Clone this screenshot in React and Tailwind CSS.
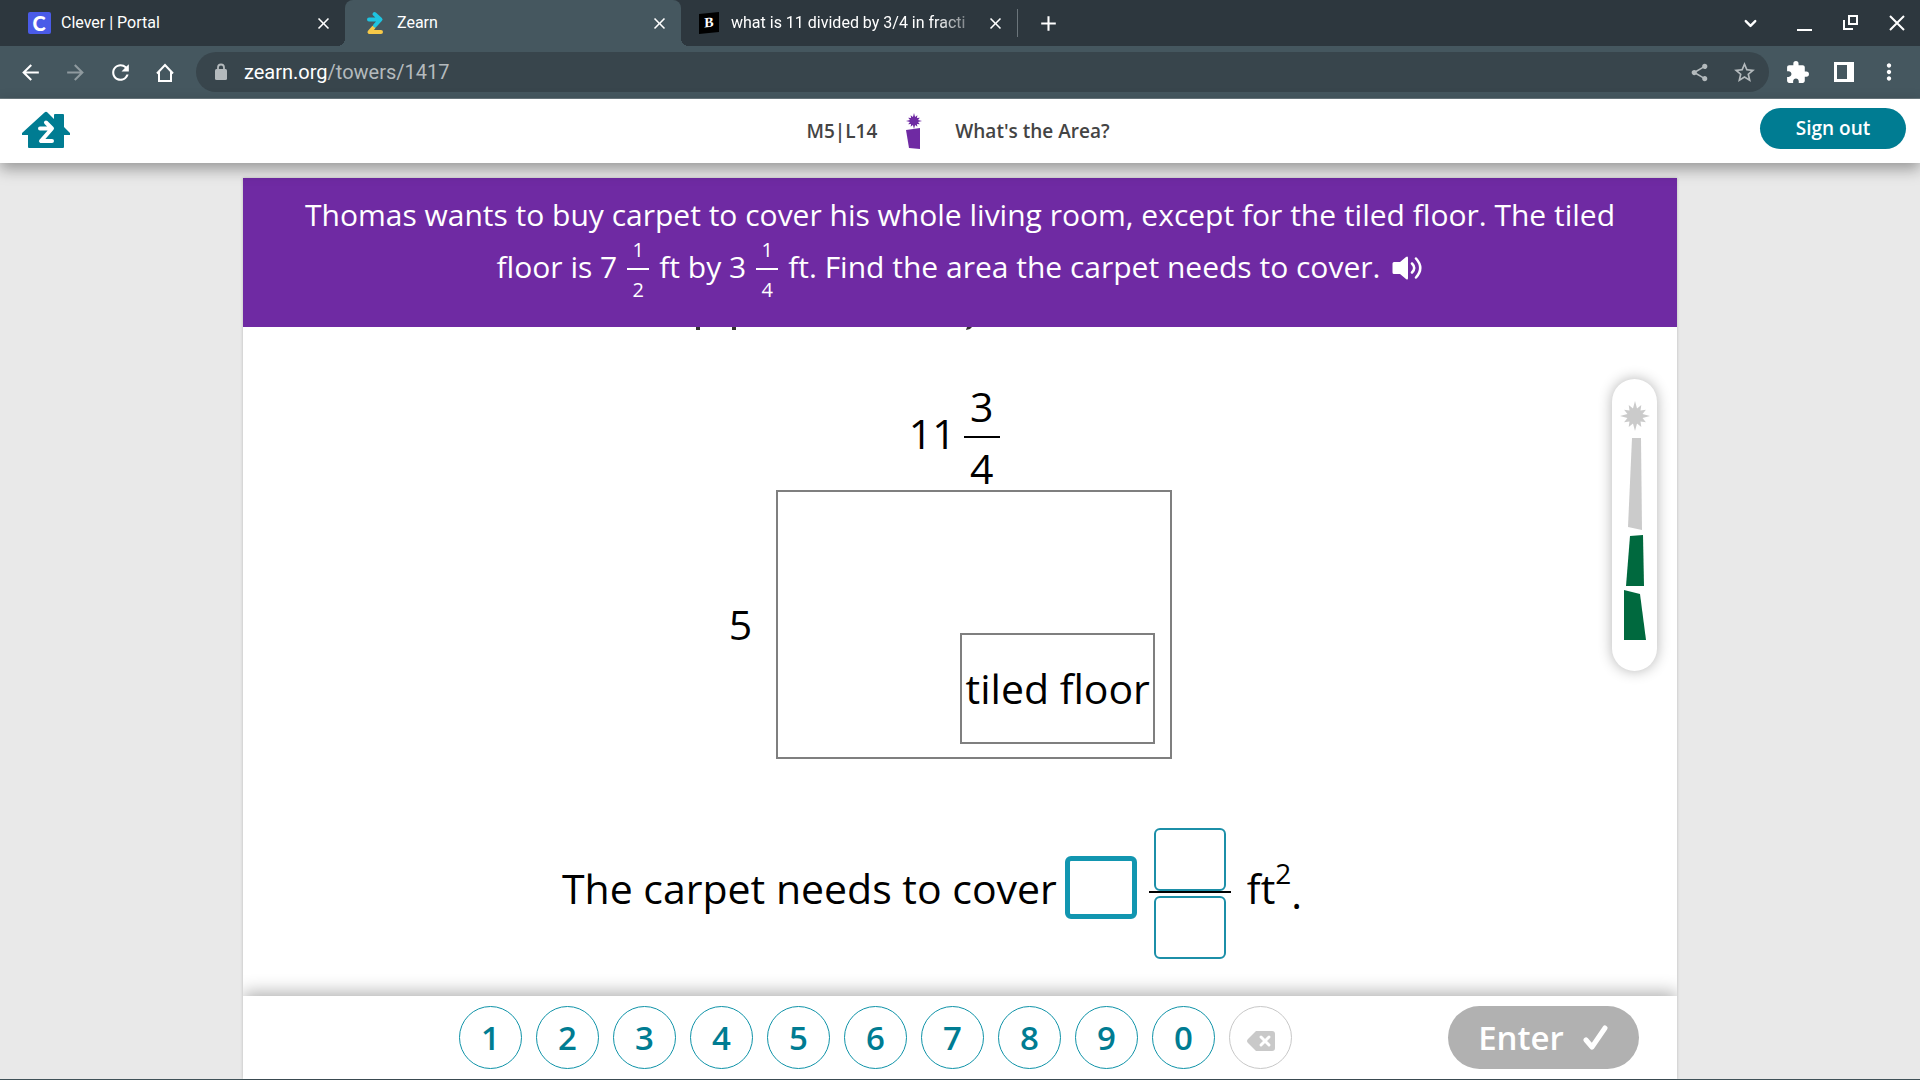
import {
  MdArrowBack,
  MdArrowForward,
  MdClose,
  MdExtension,
  MdAdd,
  MdMoreVert,
  MdRefresh,
  MdShare,
  MdStarBorder,
} from 'react-icons/md';
import { ChevronDown } from 'lucide-react';

const digits = ['1', '2', '3', '4', '5', '6', '7', '8', '9', '0'];

function CleverIcon() {
  return (
    <span className="flex h-[22px] w-[23px] items-center justify-center rounded-xs bg-[#4a5be8] font-['Lato'] text-xl leading-none font-black text-white">
      C
    </span>
  );
}

function ZearnIcon() {
  return (
    <svg width="18" height="24" viewBox="0 0 18 24" fill="none" strokeLinecap="round" strokeLinejoin="round">
      <path d="M7.500 16.500 3.500 21H15" stroke="#f7c948" strokeWidth="4" />
      <path d="M3 8.500h11M8.500 3l6 5.500-5.500 6" stroke="#1fc4e0" strokeWidth="4" />
    </svg>
  );
}

function BrainlyIcon() {
  return (
    <span className="mr-1 flex h-5 w-[21px] -skew-y-6 items-center justify-center bg-black font-['Liberation_Serif'] text-sm leading-none font-bold text-white">
      B
    </span>
  );
}

function Tab({ icon, title, active, fade }) {
  return (
    <div
      className={
        active
          ? 'relative flex h-full w-[336px] items-center rounded-t-lg bg-[#45575f] pr-3 pl-[18px] before:absolute before:bottom-0 before:-left-2 before:h-2 before:w-2 before:bg-[radial-gradient(circle_at_0_0,transparent_8px,#45575f_8px)] after:absolute after:-right-2 after:bottom-0 after:h-2 after:w-2 after:bg-[radial-gradient(circle_at_100%_0,transparent_8px,#45575f_8px)]'
          : 'flex h-full w-[336px] items-center pr-3 pl-[18px]'
      }
    >
      <span className="flex w-6 shrink-0 justify-center">{icon}</span>
      <span
        className={
          fade
            ? 'ml-2 flex-1 whitespace-nowrap [mask-image:linear-gradient(to_right,black_80%,transparent)]'
            : 'ml-2.5 flex-1 whitespace-nowrap'
        }
      >
        {title}
      </span>
      <button aria-label={`Close ${title}`} className="text-white">
        <MdClose size={19} />
      </button>
    </div>
  );
}

function BrowserBar() {
  return (
    <div className="font-['Roboto'] text-white">
      <div className="flex h-[46px] items-center bg-[#2d373e] pl-[9px] text-base">
        <Tab icon={<CleverIcon />} title="Clever | Portal" />
        <Tab icon={<ZearnIcon />} title="Zearn" active />
        <Tab icon={<BrainlyIcon />} title="what is 11 divided by 3/4 in fracti" fade />
        <div className="h-7 w-px bg-[#6b757b]" />
        <button aria-label="New tab" className="ml-[18px]">
          <MdAdd size={25} />
        </button>
        <div className="ml-auto flex items-center gap-7 pr-3.5">
          <button aria-label="Search tabs" className="mr-2">
            <ChevronDown size={19} strokeWidth={3} />
          </button>
          <button aria-label="Minimize">
            <svg width="18" height="18" viewBox="0 0 18 18">
              <path d="M1 16h15" stroke="white" strokeWidth="2" />
            </svg>
          </button>
          <button aria-label="Restore">
            <svg width="18" height="18" viewBox="0 0 18 18" fill="none" stroke="white" strokeWidth="2">
              <path d="M7 2h8v8H7zM2 6v9h9" />
            </svg>
          </button>
          <button aria-label="Close window">
            <svg width="18" height="18" viewBox="0 0 18 18">
              <path d="M2 2l14 14M16 2 2 16" stroke="white" strokeWidth="2" />
            </svg>
          </button>
        </div>
      </div>
      <div className="flex h-[53px] items-center border-b border-[#6d7b81] bg-[#45575f] pr-[18px] pl-[18px]">
        <div className="flex items-center gap-5">
          <button aria-label="Back">
            <MdArrowBack size={25} />
          </button>
          <button aria-label="Forward" className="text-[#8f9a9f]">
            <MdArrowForward size={25} />
          </button>
          <button aria-label="Reload">
            <MdRefresh size={25} />
          </button>
          <button aria-label="Home">
            <svg width="25" height="25" viewBox="0 0 25 25" fill="none" stroke="white" strokeWidth="2">
              <path d="M6 12v9h12v-9M4 13.500 12 5l8 8.500" />
            </svg>
          </button>
        </div>
        <div className="ml-[18px] flex h-10 flex-1 items-center rounded-full bg-[#38454c] pr-[12px] pl-[18px] text-[#b4babd]">
          <svg width="14" height="18" viewBox="0 0 14 18">
            <rect x="1" y="6" width="12" height="11" rx="1.500" fill="currentColor" />
            <path d="M4 7V4.500a3 3 0 0 1 6 0V7" fill="none" stroke="currentColor" strokeWidth="1.800" />
          </svg>
          <div className="ml-4 flex-1 text-xl">
            <span className="text-white">zearn.org</span>/towers/1417
          </div>
          <button aria-label="Share">
            <MdShare size={21} />
          </button>
          <button aria-label="Bookmark" className="ml-[22px]">
            <MdStarBorder size={25} />
          </button>
        </div>
        <button aria-label="Extensions" className="ml-4">
          <MdExtension size={25} />
        </button>
        <button aria-label="Side panel" className="ml-6">
          <svg width="20" height="20" viewBox="0 0 20 20">
            <path d="M0 0h20v20H0zM3 3v14h10V3z" fill="white" fillRule="evenodd" />
          </svg>
        </button>
        <button aria-label="Menu" className="ml-[22px]">
          <MdMoreVert size={26} />
        </button>
      </div>
    </div>
  );
}

// Twelve pointed burst used on the tower and the lesson marker
function Burst({ cx, cy, r, fill }) {
  const points = Array.from({ length: 24 }, (_, i) => {
    const angle = (i * Math.PI) / 12 - Math.PI / 2;
    const radius = i % 2 ? r * 0.52 : i % 6 ? r * 0.84 : r;
    return `${cx + radius * Math.cos(angle)},${cy + radius * Math.sin(angle)}`;
  });
  return <polygon points={points.join(' ')} fill={fill} />;
}

function LessonHeader() {
  return (
    <header className="relative z-10 grid h-16 grid-cols-[1fr_auto_1fr] items-center bg-white px-[14px] shadow-[0_6px_14px_rgba(0,0,0,0.35)]">
      <a href="#home" aria-label="Home" className="mb-0.5 ml-2 justify-self-start">
        <svg width="48" height="38" viewBox="0 0 48 38">
          <path
            d="M22.500 1.500q1.500-1.500 3 0L32 8V4q0-1 1-1h8q1 0 1 1v12l6 6v2h-6v12q0 1-1 1H7q-1 0-1-1V24H0v-2Z"
            fill="#007c92"
          />
          <g fill="none" stroke="white" strokeWidth="4" strokeLinecap="round" strokeLinejoin="round">
            <path d="M18 17.500h11M24 11.500l6 6-11 12.500h11" />
          </g>
        </svg>
      </a>
      <div className="mr-1 flex items-center text-[19px] font-semibold text-[#444]">
        <span>M5|L14</span>
        <svg width="18" height="38" viewBox="0 0 18 38" className="mr-8 ml-7">
          <Burst cx={9} cy={9} r={8} fill="#6f2aa3" />
          <path d="M1 18 15 16v21l-11-1Z" fill="#6f2aa3" />
        </svg>
        <span>What's the Area?</span>
      </div>
      <button className="mb-1.5 h-[41px] w-[146px] justify-self-end rounded-full bg-[#007c92] text-[19px] font-semibold text-white">
        Sign out
      </button>
    </header>
  );
}

function SmallFraction({ top, bottom }) {
  return (
    <span className="mx-2.5 -my-3 inline-flex flex-col items-center align-middle text-[20px] leading-7">
      <span>{top}</span>
      <span className="mt-1 mb-1.5 h-0.5 w-[22px] bg-white" />
      <span>{bottom}</span>
    </span>
  );
}

function Question() {
  return (
    <div className="h-[149px] bg-[#6f2aa3] pt-[11px] text-center text-[30px] leading-[52px] text-white">
      <p>Thomas wants to buy carpet to cover his whole living room, except for the tiled floor. The tiled</p>
      <p>
        floor is 7<SmallFraction top="1" bottom="2" />
        ft by 3<SmallFraction top="1" bottom="4" />
        ft. Find the area the carpet needs to cover.
        <button aria-label="Listen" className="ml-3 align-middle">
          <svg width="31" height="26" viewBox="0 0 31 26" className="mb-1">
            <path d="M2 7h6l6-5q2-1.500 2 1v20q0 2.500-2 1l-6-5H2q-1.500 0-1.500-1.500v-9Q.5 7 2 7Z" fill="white" />
            <path
              d="M20 8.500q4.500 4.500 0 9M24 3.500q8.500 9.500 0 19"
              fill="none"
              stroke="white"
              strokeWidth="2.500"
              strokeLinecap="round"
            />
          </svg>
        </button>
      </p>
    </div>
  );
}

function Figure() {
  return (
    <div className="mt-[54px] grid grid-cols-[auto_auto] justify-center gap-x-6 pr-[19px] text-[41px]">
      <div className="col-start-2 mr-10 flex items-center justify-center leading-[44px]">
        <span className="pb-2">11</span>
        <span className="ml-2 flex flex-col items-center">
          <span>3</span>
          <span className="my-2 h-0.5 w-9 bg-black" />
          <span>4</span>
        </span>
      </div>
      <span className="col-start-1 self-center">5</span>
      <div className="flex h-[269px] w-[396px] items-end justify-end border-2 border-[#7f7f7f] pr-[15px] pb-[13px]">
        <div className="flex h-[111px] w-[195px] items-center justify-center border-2 border-[#7f7f7f] whitespace-nowrap">
          tiled floor
        </div>
      </div>
    </div>
  );
}

function Answer() {
  return (
    <div className="mt-[69px] flex items-center justify-center pr-14 text-[41px]">
      <label htmlFor="whole" className="pb-2.5">
        The carpet needs to cover
      </label>
      <input
        id="whole"
        className="mb-3 ml-2 h-[63px] w-[72px] rounded-md border-[5px] border-[#1296b0] text-center outline-none"
      />
      <div className="ml-3 flex flex-col items-center">
        <input
          aria-label="Numerator"
          className="h-[63px] w-[72px] rounded-md border-2 border-[#1c8fa8] text-center outline-none"
        />
        <span className="mb-[3px] h-0.5 w-[82px] bg-black" />
        <input
          aria-label="Denominator"
          className="h-[63px] w-[72px] rounded-md border-2 border-[#1c8fa8] text-center outline-none"
        />
      </div>
      <span className="ml-4 pb-2.5">
        ft<sup className="-top-5 text-[28px]">2</sup>
      </span>
      <span>.</span>
    </div>
  );
}

function Tower() {
  return (
    <div className="absolute top-[52px] right-5 rounded-full bg-white shadow-[0_0_14px_rgba(0,0,0,0.3)]">
      <svg width="45" height="292" viewBox="0 0 45 292">
        <Burst cx={23} cy={37} r={15} fill="#cbcbcb" />
        <path d="M20 59h9l1 92-14-3Z" fill="#cbcbcb" />
        <path d="M18 157l13-1 1 51H14Z" fill="#00693e" />
        <path d="M12 211l16 4 6 46H12Z" fill="#00693e" />
      </svg>
    </div>
  );
}

function Keypad() {
  return (
    <div className="relative flex h-[83px] items-center justify-between bg-white pr-[38px] pl-[216px] shadow-[0_-4px_16px_rgba(0,0,0,0.3)] [clip-path:inset(-24px_0_0_0)]">
      <div className="flex gap-[14px]">
        {digits.map((digit) => (
          <button
            key={digit}
            className="h-[63px] w-[63px] rounded-full border border-[#0f93a8] text-[33px] font-semibold text-[#007c92]"
          >
            {digit}
          </button>
        ))}
        <button
          aria-label="Delete"
          className="flex h-[63px] w-[63px] items-center justify-center rounded-full border border-[#c8c8c8]"
        >
          <svg width="28" height="20" viewBox="0 0 28 20" className="mt-1.5">
            <path d="M9 0h16q3 0 3 3v14q0 3-3 3H9L1 12q-2-2 0-4Z" fill="#c9c9c9" />
            <path d="M14 6l8 8M22 6l-8 8" stroke="white" strokeWidth="3" strokeLinecap="round" />
          </svg>
        </button>
      </div>
      <button className="flex h-[63px] w-[191px] items-center justify-center gap-[19px] rounded-full bg-[#b1b1b1] text-[33px] font-semibold text-white">
        Enter
        <svg width="26" height="26" viewBox="0 0 26 26" fill="none">
          <path d="M3 15l6 7L22 3" stroke="white" strokeWidth="5" strokeLinecap="round" strokeLinejoin="round" />
        </svg>
      </button>
    </div>
  );
}

export default function App() {
  return (
    <div className="flex min-h-screen flex-col border-b border-[#3f5158] bg-[#e9e9e9] font-['Open_Sans',sans-serif] text-black">
      <BrowserBar />
      <LessonHeader />
      <main className="mx-auto mt-[15px] flex w-full max-w-[1434px] flex-1 flex-col bg-white shadow-[0_0_3px_rgba(0,0,0,0.2)]">
        <Question />
        <section className="relative flex-1 pb-9">
          {/* tails of the line scrolled under the banner */}
          <div className="flex justify-center pr-64">
            <svg width="280" height="3" viewBox="0 0 280 3" fill="#333">
              <path d="M4 0h4v3H4zM40 0h4v3h-4zM275 0h5l-2 2-4 1Z" />
            </svg>
          </div>
          <Figure />
          <Answer />
          <Tower />
        </section>
        <Keypad />
      </main>
    </div>
  );
}
